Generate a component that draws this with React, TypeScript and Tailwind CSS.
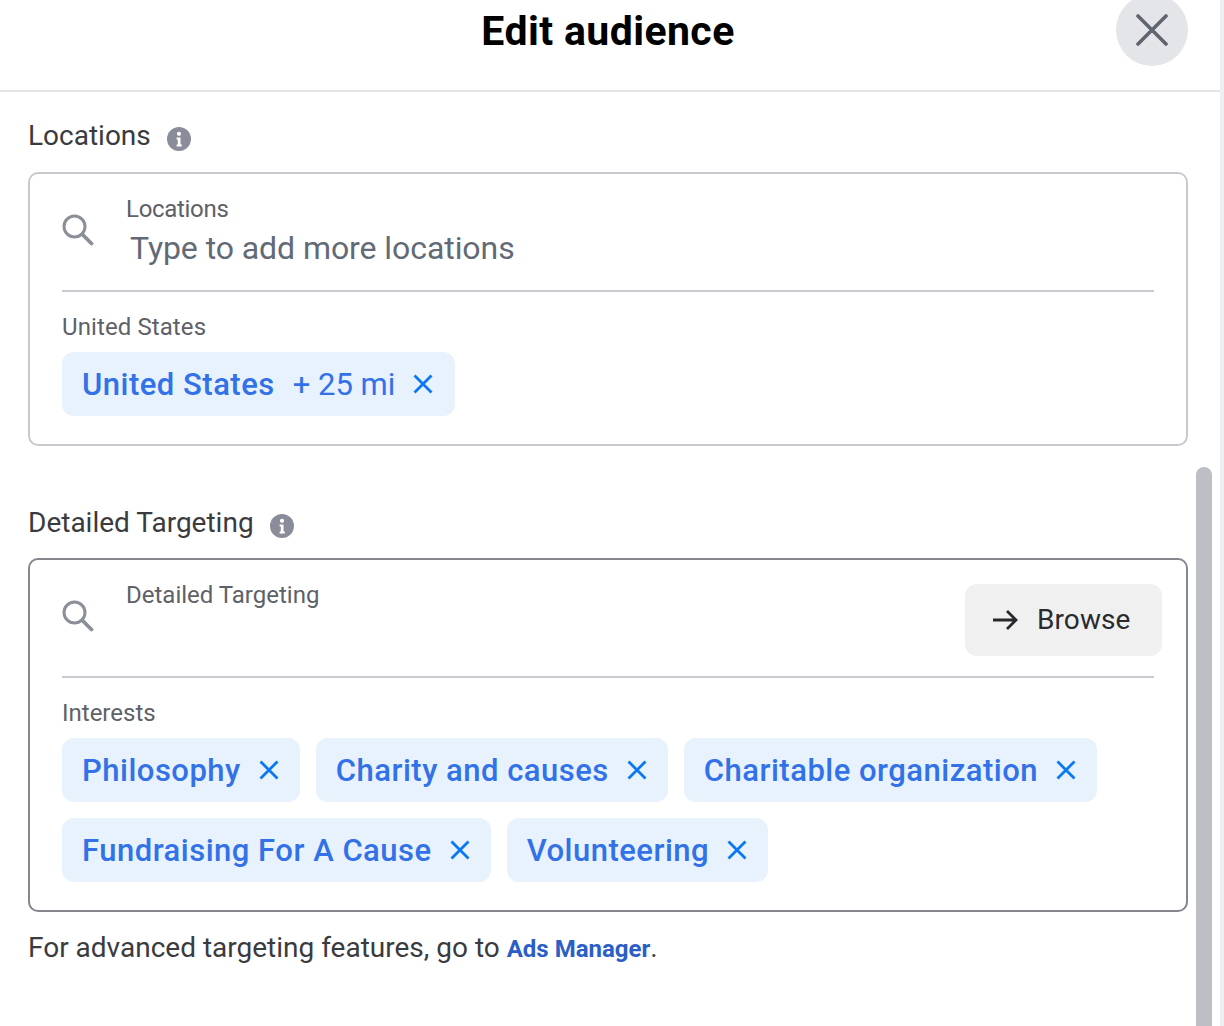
import React from 'react';

const font = { fontFamily: 'Roboto, sans-serif' };

function InfoIcon() {
    return (
        <svg width="24" height="24" viewBox="0 0 24 24" className="shrink-0">
            <circle cx="12" cy="12" r="12" fill="#8a8d99" />
            <circle cx="12" cy="6.8" r="2.1" fill="#fff" />
            <path d="M9.6 10.4h3.9v7.2h1.3v2H9.6v-2h1.2v-5.2H9.6z" fill="#fff" />
        </svg>
    );
}

function SearchIcon() {
    return (
        <svg width="32" height="32" viewBox="0 0 32 32" fill="none" className="shrink-0">
            <circle cx="12.5" cy="12.5" r="10.5" stroke="#8a8f98" strokeWidth="3" />
            <path d="M21 21L29.5 29.5" stroke="#8a8f98" strokeWidth="3.8" strokeLinecap="round" />
        </svg>
    );
}

function Chip({ label, extra }: { label: string; extra?: string }) {
    return (
        <div className={extra ? 'flex h-16 items-center rounded-xl bg-[#e7f2fd] pl-5 pr-[22px]' : 'flex h-16 items-center rounded-xl bg-[#e7f2fd] pl-5 pr-[21px]'}>
            <span className="mt-[2px] text-[31px] font-medium tracking-[0.5px] text-[#3271e7]">{label}</span>
            {extra && <span className="ml-[18px] mt-[2px] text-[31px] text-[#3271e7]">{extra}</span>}
            <svg width="20" height="20" viewBox="0 0 20 20" className="ml-[18px] shrink-0">
                <path d="M1.5 1.5l17 17M18.5 1.5l-17 17" stroke="#0a78f0" strokeWidth="2.8" fill="none" />
            </svg>
        </div>
    );
}

function SectionTitle({ text }: { text: string }) {
    return (
        <div className="flex h-9 items-center gap-4">
            <span className="text-[28px] text-[#3a3b3e]">{text}</span>
            <span className="mt-[6px]"><InfoIcon /></span>
        </div>
    );
}

export default function App() {
    return (
        <div className="relative flex h-[1026px] w-[1224px] overflow-hidden bg-white" style={font}>
            <div className="w-[1220px]">
                {/* Header */}
                <div className="relative flex h-[92px] items-start justify-center border-b-2 border-[#e4e5e8] pt-[5px]">
                    <h1 className="-ml-1 text-[41px] font-bold leading-[52px] tracking-[0.4px] text-black">Edit audience</h1>
                    <button className="absolute right-8 top-[-6px] flex h-[72px] w-[72px] items-center justify-center rounded-full bg-[#e3e5e9]">
                        <svg width="32" height="32" viewBox="0 0 32 32">
                            <path d="M2 2l28 28M30 2L2 30" stroke="#5f656e" strokeWidth="3.6" strokeLinecap="round" fill="none" />
                        </svg>
                    </button>
                </div>

                <div className="px-7 pt-[26px]">
                    <SectionTitle text="Locations" />

                    <div className="mt-[18px] h-[274px] w-[1160px] rounded-[10px] border-2 border-[#c8c9cf] px-8">
                        <div className="flex h-[118px] border-b-2 border-[#cbccd1]">
                            <div className="mt-10"><SearchIcon /></div>
                            <div className="ml-8 pt-[19px]">
                                <div className="text-[24px] leading-[32px] tracking-[-0.3px] text-[#5e6168]">Locations</div>
                                <div className="ml-1 mt-[2px] text-[32px] leading-[42px] tracking-[-0.07px] text-[#626a75]">Type to add more locations</div>
                            </div>
                        </div>
                        <div className="mt-[19px] text-[24px] leading-[32px] tracking-[0.1px] text-[#5e6168]">United States</div>
                        <div className="mt-[9px] flex">
                            <Chip label="United States" extra="+ 25 mi" />
                        </div>
                    </div>

                    <div className="mt-[58px] pt-px">
                        <SectionTitle text="Detailed Targeting" />
                    </div>

                    <div className="mt-[17px] h-[354px] w-[1160px] rounded-[10px] border-2 border-[#85878c] pl-8 pr-6">
                        <div className="mr-2 flex h-[118px] border-b-2 border-[#cbccd1]">
                            <div className="mt-10"><SearchIcon /></div>
                            <div className="ml-8 flex-1 pt-[19px] text-[24px] leading-[32px] text-[#5e6168]">Detailed Targeting</div>
                            <button className="-mr-2 mt-6 flex h-[72px] w-[197px] items-center rounded-xl bg-[#f0f0f1] pl-[27px]">
                                <svg width="26" height="22" viewBox="0 0 26 22" fill="none">
                                    <path d="M1 11h23M15 2l9 9-9 9" stroke="#26282b" strokeWidth="2.8" />
                                </svg>
                                <span className="ml-[19px] text-[28px] tracking-[0.1px] text-[#2a2b2e]">Browse</span>
                            </button>
                        </div>
                        <div className="mt-[19px] text-[24px] leading-[32px] text-[#5e6168]">Interests</div>
                        <div className="mt-[9px] flex flex-wrap gap-4">
                            <Chip label="Philosophy" />
                            <Chip label="Charity and causes" />
                            <Chip label="Charitable organization" />
                            <Chip label="Fundraising For A Cause" />
                            <Chip label="Volunteering" />
                        </div>
                    </div>

                    <p className="mt-[18px] text-[28px] leading-[36px] text-[#3a3b3e]">
                        For advanced targeting features, go to{' '}
                        <a className="text-[24px] font-bold text-[#2b5fc6]">Ads Manager</a>.
                    </p>
                </div>
            </div>
            <div className="w-1 bg-[#eeeff1]" />
            {/* Scrollbar thumb */}
            <div className="absolute left-[1196px] top-[467px] h-[600px] w-4 rounded-full bg-[#bcc0c5]" />
        </div>
    );
}
